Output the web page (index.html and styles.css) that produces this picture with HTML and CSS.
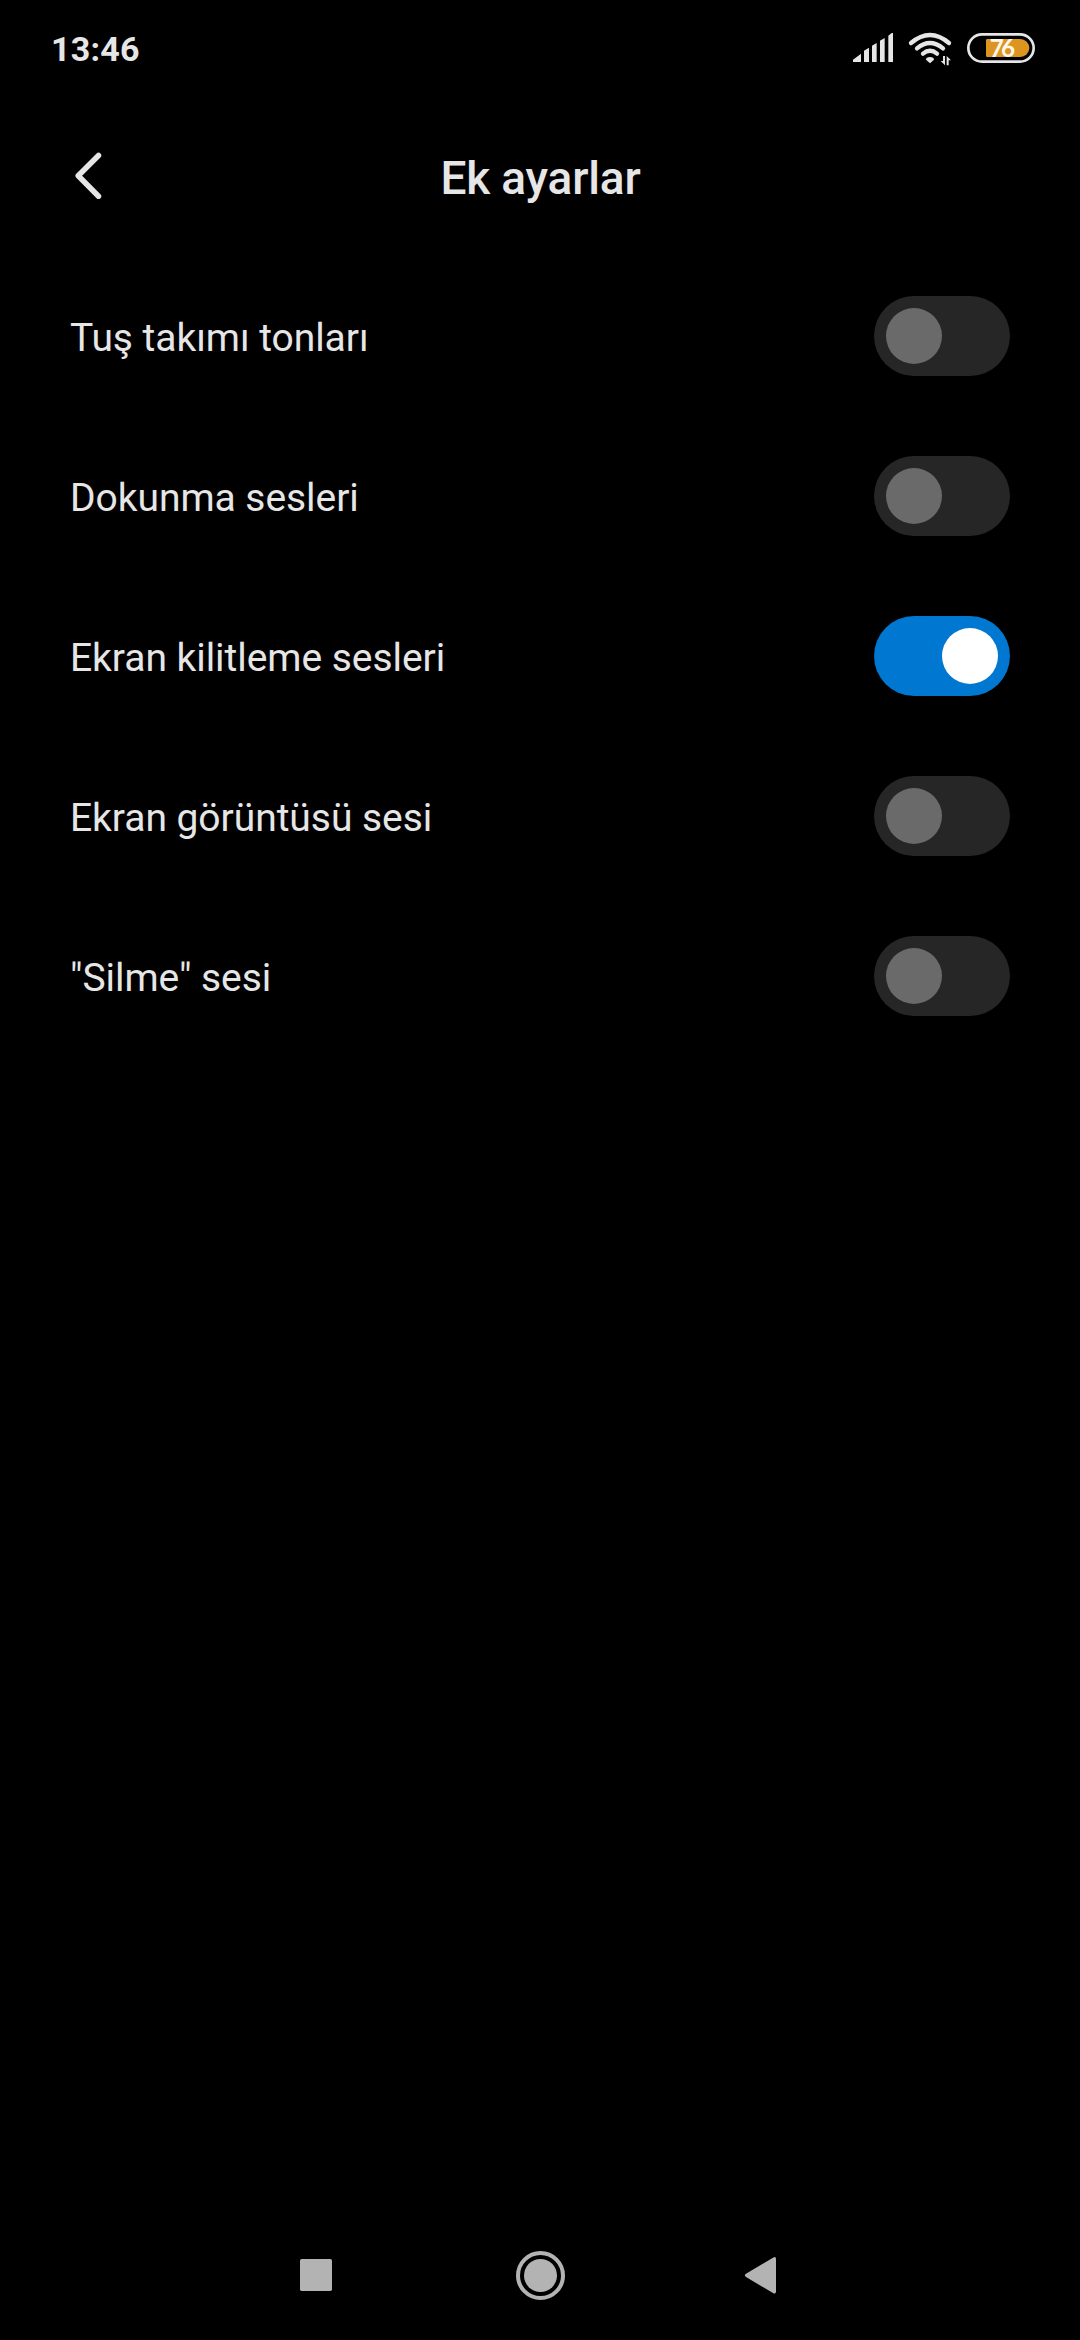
FILE: index.html
```html
<!DOCTYPE html>
<html lang="tr">
<head>
<meta charset="utf-8">
<title>Ek ayarlar</title>
<link rel="stylesheet" href="styles.css">
</head>
<body>
<div class="screen">
  <div class="status-bar">
    <span class="clock">13:46</span>
    <svg class="status-icons" viewBox="0 0 630 180" fill="#e6e6e6">
      <path d="M39 126V119L63 101V126ZM72 126V92L87 83V126ZM96 126V77L110 69V126ZM120 126V62L134 54V126ZM145 126V47L155 39H159V126Z"/>
      <g fill="none" stroke="#e6e6e6" stroke-width="13" stroke-linecap="round">
        <path d="M213 69Q270 21 327 69"/>
        <path d="M231 85Q270 53 309 85"/>
        <path d="M249 101Q270 84 291 101"/>
      </g>
      <path d="M258 119Q258 111 270 111Q282 111 282 119L270 130Z"/>
      <path d="M309 108H315V136L302 123H309ZM320 136V108L333 121H326V136Z"/>
      <rect x="385" y="43" width="196" height="82" rx="41" fill="none" stroke="#e6e6e6" stroke-width="8"/>
      <path d="M442 57H541A27 27 0 0 1 541 111H442Q438 111 438 107V61Q438 57 442 57Z" fill="#dc951f"/>
      <text class="battery-level" x="449" y="110">76</text>
    </svg>
  </div>
  <header class="title-bar">
    <svg class="back" viewBox="0 0 100 100"><path d="M48.500 25.500L28.200 45.800L48.500 66.200" fill="none" stroke="#e6e6e6" stroke-width="5.500" stroke-linecap="round" stroke-linejoin="round"/></svg>
    <h1 class="title">Ek ayarlar</h1>
  </header>
  <main class="settings">
    <div class="row"><span class="label">Tuş takımı tonları</span><span class="toggle"></span></div>
    <div class="row"><span class="label">Dokunma sesleri</span><span class="toggle"></span></div>
    <div class="row"><span class="label">Ekran kilitleme sesleri</span><span class="toggle on"></span></div>
    <div class="row"><span class="label">Ekran görüntüsü sesi</span><span class="toggle"></span></div>
    <div class="row"><span class="label">"Silme" sesi</span><span class="toggle"></span></div>
  </main>
  <nav class="nav-bar">
    <svg class="nav-icons" viewBox="0 0 1560 270" fill="#b3b3b3">
      <rect x="60" y="87" width="96" height="96" rx="5"/>
      <circle cx="781.500" cy="136.500" r="67.500" fill="none" stroke="#b3b3b3" stroke-width="12"/>
      <circle cx="781.500" cy="136.500" r="49.500"/>
      <path d="M1398 131L1479 83Q1488 78 1488 88V184Q1488 194 1479 189L1398 141Q1391 136 1398 131Z"/>
    </svg>
  </nav>
</div>
</body>
</html>
```
FILE: styles.css
```css
body {
  margin: 0;
  background: #000;
  color: #e6e6e6;
  font-family: Roboto, sans-serif;
}
.screen {
  display: flex;
  flex-direction: column;
  height: 2340px;
}
.status-bar {
  display: flex;
  justify-content: space-between;
  height: 80px;
  padding: 0 30px 0 51px;
}
.clock {
  padding-top: 19px;
  font-size: 34px;
  letter-spacing: 0.2px;
  line-height: 60px;
  font-weight: 700;
}
.status-icons {
  width: 210px;
  height: 60px;
  margin-top: 20px;
}
.battery-level {
  font: 700 73px Lato, sans-serif;
  letter-spacing: -8px;
  fill: #fff8ea;
}
.title-bar {
  display: grid;
  grid-template-columns: 100px 1fr 100px;
  height: 126px;
  padding: 50px 50px 0;
}
.back {
  width: 100px;
  height: 100px;
}
.title {
  margin: 0;
  padding: 18px 0 0 1px;
  font-size: 46px;
  letter-spacing: -0.2px;
  line-height: 60px;
  font-weight: 500;
  text-align: center;
}
.settings {
  flex: 1;
}
.row {
  display: flex;
  align-items: center;
  justify-content: space-between;
  height: 160px;
  padding: 0 70px;
}
.label {
  padding-top: 3px;
  font-size: 39px;
  letter-spacing: -0.05px;
}
.toggle {
  box-sizing: border-box;
  display: flex;
  width: 136px;
  height: 80px;
  padding: 12px;
  border-radius: 40px;
  background: #262626;
}
.toggle::before {
  content: "";
  width: 56px;
  height: 56px;
  border-radius: 50%;
  background: #6a6a6a;
}
.toggle.on {
  justify-content: flex-end;
  background: #0077d0;
}
.toggle.on::before {
  background: #fff;
}
.nav-bar {
  display: flex;
  justify-content: center;
  height: 110px;
}
.nav-icons {
  width: 520px;
  height: 90px;
}
```
